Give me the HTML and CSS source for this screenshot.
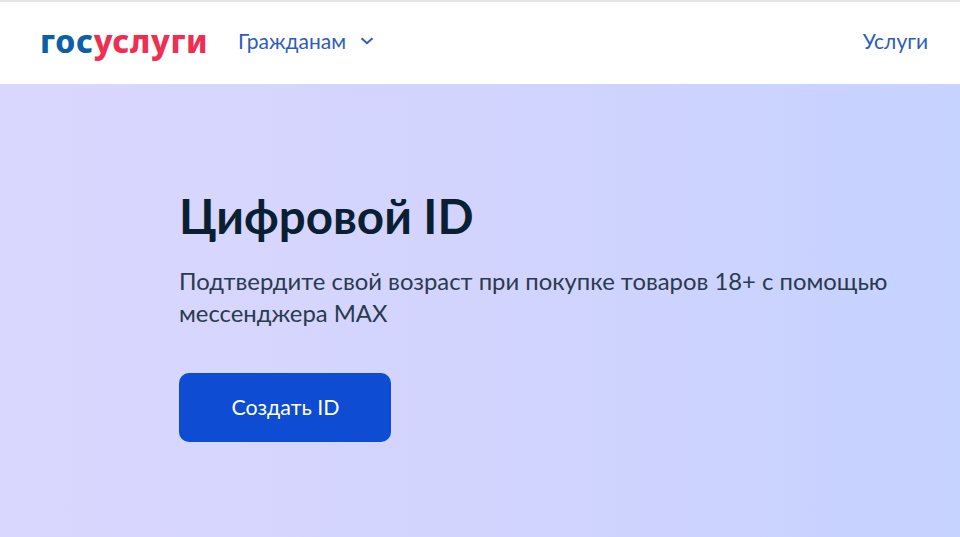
FILE: index.html
```html
<!DOCTYPE html>
<html lang="ru">
<head>
<meta charset="utf-8">
<title>Цифровой ID</title>
<link rel="stylesheet" href="styles.css">
</head>
<body>
<header class="header">
  <a class="logo" href="#"><span class="logo-blue">гос</span><span class="logo-red">услуги</span></a>
  <a class="nav-link nav-citizens" href="#">Гражданам
    <svg class="chevron" width="14" height="8" viewBox="0 0 14 8" fill="none"><path d="M1.500 1.200 7 6.200l5.500-5" stroke="#2d5cbd" stroke-width="2"/></svg>
  </a>
  <a class="nav-link nav-services" href="#">Услуги</a>
</header>
<main class="hero">
  <h1 class="title">Цифровой ID</h1>
  <p class="text">Подтвердите свой возраст при покупке товаров 18+ с помощью мессенджера MAX</p>
  <a class="button" href="#">Создать ID</a>
</main>
</body>
</html>
```
FILE: styles.css
```css
* { box-sizing: border-box; }
html, body { margin: 0; height: 100%; }
body {
  width: 960px;
  height: 537px;
  overflow: hidden;
  display: flex;
  flex-direction: column;
  font-family: Lato, "Noto Sans", sans-serif;
  background: #fff;
}
a { text-decoration: none; }
.header {
  height: 84px;
  flex: none;
  display: flex;
  align-items: center;
  padding: 0 32px 0 40px;
  background: #fff;
  border-top: 2px solid #e6e6e6;
}
.logo {
  font-family: "Noto Sans", sans-serif;
  font-weight: 800;
  font-size: 32px;
  letter-spacing: 0.7px;
  line-height: 1;
  width: 198px;
  margin-bottom: 4px;
}
.logo-blue { color: #0d5fa8; }
.logo-red { color: #ee2f53; }
.nav-link {
  color: #2d5cbd;
  font-size: 21px;
  line-height: 24px;
  margin-bottom: 4px;
}
.nav-citizens {
  display: flex;
  align-items: center;
  gap: 14px;
}
.nav-services { margin-left: auto; }
.hero {
  flex: 1;
  padding: 106px 60px 0 179px;
  background: linear-gradient(90deg, #dad7fe 0%, #d2d4fe 50%, #c6d2ff 100%);
}
.title {
  margin: 0;
  color: #0b1f33;
  font-size: 47.5px;
  font-weight: 700;
  line-height: 52px;
}
.text {
  margin: 23px 0 0;
  color: #2b3a4d;
  font-size: 23.85px;
  line-height: 32px;
}
.button {
  display: flex;
  align-items: center;
  justify-content: center;
  width: 212px;
  height: 69px;
  margin-top: 44px;
  padding: 0 0 2px 1px;
  border-radius: 10px;
  background: #0d4cd3;
  color: #fff;
  font-size: 21.4px;
}
```
